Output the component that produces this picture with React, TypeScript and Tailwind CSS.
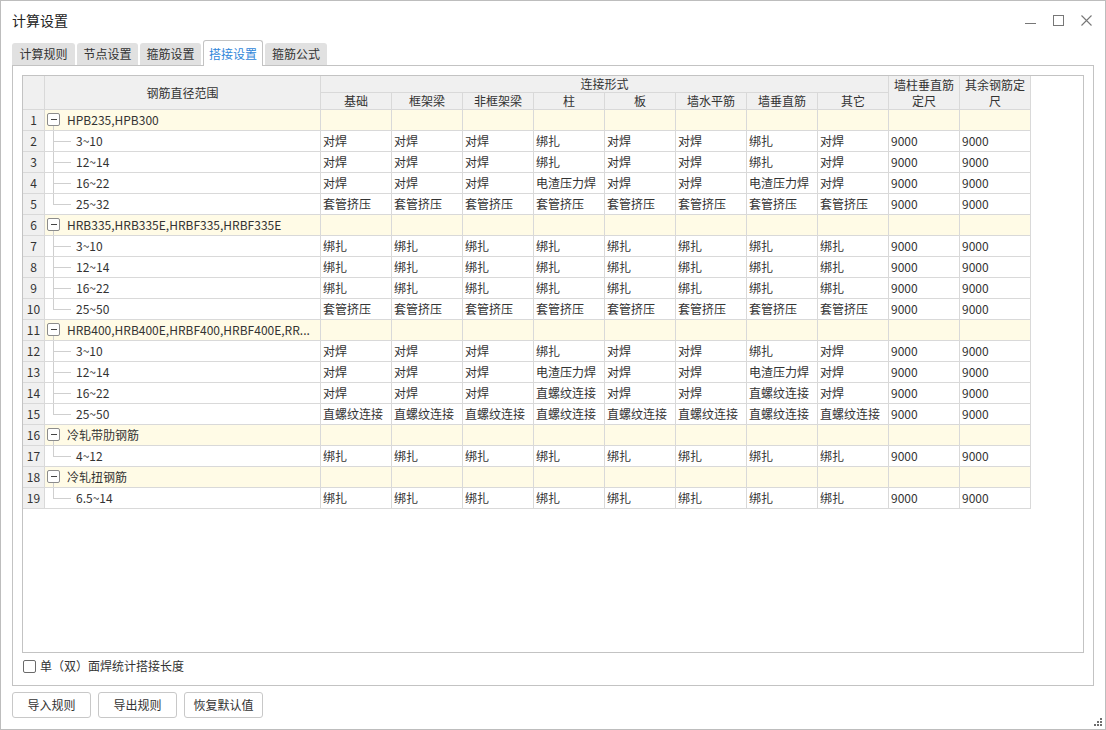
import type { ReactNode } from 'react'

type Row =
  | { kind: 'group'; label: string }
  | { kind: 'item'; range: string; vals: string[]; last?: boolean }

const HAN = '对焊'
const BANG = '绑扎'
const DZ = '电渣压力焊'
const TG = '套管挤压'
const ZL = '直螺纹连接'

const fill = (v: string) => Array(8).fill(v) as string[]

const rows: Row[] = [
  { kind: 'group', label: 'HPB235,HPB300' },
  { kind: 'item', range: '3~10', vals: [HAN, HAN, HAN, BANG, HAN, HAN, BANG, HAN] },
  { kind: 'item', range: '12~14', vals: [HAN, HAN, HAN, BANG, HAN, HAN, BANG, HAN] },
  { kind: 'item', range: '16~22', vals: [HAN, HAN, HAN, DZ, HAN, HAN, DZ, HAN] },
  { kind: 'item', range: '25~32', vals: fill(TG), last: true },
  { kind: 'group', label: 'HRB335,HRB335E,HRBF335,HRBF335E' },
  { kind: 'item', range: '3~10', vals: fill(BANG) },
  { kind: 'item', range: '12~14', vals: fill(BANG) },
  { kind: 'item', range: '16~22', vals: fill(BANG) },
  { kind: 'item', range: '25~50', vals: fill(TG), last: true },
  { kind: 'group', label: 'HRB400,HRB400E,HRBF400,HRBF400E,RR...' },
  { kind: 'item', range: '3~10', vals: [HAN, HAN, HAN, BANG, HAN, HAN, BANG, HAN] },
  { kind: 'item', range: '12~14', vals: [HAN, HAN, HAN, DZ, HAN, HAN, DZ, HAN] },
  { kind: 'item', range: '16~22', vals: [HAN, HAN, HAN, ZL, HAN, HAN, ZL, HAN] },
  { kind: 'item', range: '25~50', vals: fill(ZL), last: true },
  { kind: 'group', label: '冷轧带肋钢筋' },
  { kind: 'item', range: '4~12', vals: fill(BANG), last: true },
  { kind: 'group', label: '冷轧扭钢筋' },
  { kind: 'item', range: '6.5~14', vals: fill(BANG), last: true },
]

const subHeads = ['基础', '框架梁', '非框架梁', '柱', '板', '墙水平筋', '墙垂直筋', '其它']
const tabs = [
  { label: '计算规则', w: 'w-[63px]' },
  { label: '节点设置', w: 'w-[61px]' },
  { label: '箍筋设置', w: 'w-[61px]' },
  { label: '搭接设置', w: 'w-[60px]', active: true },
  { label: '箍筋公式', w: 'w-[62px]' },
]

const line = 'border-r border-b border-[#d9d9d9]'

function Head({ className = '', children }: { className?: string; children?: ReactNode }) {
  return (
    <div className={`flex items-center justify-center bg-[#f0f0f0] text-center leading-[16px] ${line} ${className}`}>
      {children}
    </div>
  )
}

function GroupGlyph() {
  return (
    <svg width="16" height="20" viewBox="0 0 16 20" className="shrink-0" aria-hidden>
      <rect x="2.5" y="3.5" width="12" height="12" rx="1.5" fill="#fff" stroke="#8c8c8c" />
      <path d="M5.5 9.5h6" stroke="#444" shapeRendering="crispEdges" />
      <path d="M8.5 16v4" stroke="#cfcfcf" shapeRendering="crispEdges" />
    </svg>
  )
}

function BranchGlyph({ last }: { last?: boolean }) {
  return (
    <svg width="31" height="20" viewBox="0 0 31 20" className="shrink-0" aria-hidden>
      <path d={last ? 'M8.5 0v10.5' : 'M8.5 0v20'} stroke="#cfcfcf" shapeRendering="crispEdges" />
      <path d="M8.5 10.5H26" stroke="#cfcfcf" shapeRendering="crispEdges" />
    </svg>
  )
}

function WindowControls() {
  return (
    <div className="ml-auto flex items-center gap-[17px] text-[#777]">
      <svg width="11" height="11" viewBox="0 0 11 11" aria-hidden>
        <path d="M0 8.5h11" stroke="currentColor" shapeRendering="crispEdges" />
      </svg>
      <svg width="11" height="11" viewBox="0 0 11 11" aria-hidden>
        <rect x="0.5" y="0.5" width="10" height="10" fill="none" stroke="currentColor" shapeRendering="crispEdges" />
      </svg>
      <svg width="11" height="11" viewBox="0 0 11 11" aria-hidden>
        <path d="M0.5 0.5l10 10M10.5 0.5l-10 10" stroke="currentColor" strokeWidth="1.1" />
      </svg>
    </div>
  )
}

export default function App() {
  return (
    <div className="relative flex h-[730px] w-[1106px] flex-col border border-[#bdbdbd] bg-white font-['Noto_Sans_CJK_SC',sans-serif] text-[12px] text-[#333]">
      {/* title bar */}
      <div className="flex h-[39px] shrink-0 items-center pl-[11px] pr-[13px]">
        <span className="text-[14px] text-[#222]">计算设置</span>
        <WindowControls />
      </div>

      {/* tabs */}
      <div className="relative z-10 flex h-[25px] shrink-0 items-start gap-[2px] pl-[11px]">
        {tabs.map((t) =>
          t.active ? (
            <div
              key={t.label}
              className={`${t.w} flex h-[26px] items-center justify-center rounded-t-[3px] border-x border-t border-[#c3c3c3] bg-white text-[#2f86d9]`}
            >
              {t.label}
            </div>
          ) : (
            <div
              key={t.label}
              className={`${t.w} mt-[3px] flex h-[22px] items-center justify-center rounded-t-[3px] bg-[#e1e1e1] text-[#333]`}
            >
              {t.label}
            </div>
          ),
        )}
      </div>

      {/* panel */}
      <div className="mx-[11px] flex h-[621px] shrink-0 flex-col border border-[#c3c3c3] px-[9px] pt-[9px]">
        <div className="h-[578px] shrink-0 overflow-hidden border border-[#c3c3c3]">
          <div className="grid grid-cols-[22px_276px_repeat(10,71px)] grid-rows-[17px_17px_repeat(19,21px)]">
            <Head className="row-span-2" />
            <Head className="row-span-2">钢筋直径范围</Head>
            <Head className="col-span-8">连接形式</Head>
            <Head className="row-span-2">
              墙柱垂直筋
              <br />
              定尺
            </Head>
            <Head className="row-span-2">
              其余钢筋定
              <br />
              尺
            </Head>
            {subHeads.map((h) => (
              <Head key={h}>{h}</Head>
            ))}

            {rows.map((r, i) => (
              <div key={i} className="contents">
                <div className={`flex items-center justify-center bg-[#f0f0f0] ${line}`}>{i + 1}</div>
                {r.kind === 'group' ? (
                  <>
                    <div className={`flex items-center bg-[#fffbe6] ${line}`}>
                      <GroupGlyph />
                      <span className="ml-[6px] whitespace-nowrap">{r.label}</span>
                    </div>
                    {Array.from({ length: 10 }).map((_, c) => (
                      <div key={c} className={`bg-[#fffbe6] ${line}`} />
                    ))}
                  </>
                ) : (
                  <>
                    <div className={`flex items-center ${line}`}>
                      <BranchGlyph last={r.last} />
                      <span className="whitespace-nowrap">{r.range}</span>
                    </div>
                    {[...r.vals, '9000', '9000'].map((v, c) => (
                      <div key={c} className={`flex items-center whitespace-nowrap pl-[2px] ${line}`}>
                        {v}
                      </div>
                    ))}
                  </>
                )}
              </div>
            ))}
          </div>
        </div>

        <label className="ml-[1px] mt-[6px] flex h-[14px] items-center">
          <span className="h-[13px] w-[13px] rounded-[2px] border border-[#6b6b6b] bg-white" />
          <span className="ml-[4px]">单（双）面焊统计搭接长度</span>
        </label>
      </div>

      {/* buttons */}
      <div className="mt-[6px] flex gap-[7px] pl-[11px]">
        {['导入规则', '导出规则', '恢复默认值'].map((b) => (
          <button
            key={b}
            className="h-[26px] w-[79px] rounded-[3px] border border-[#c8c8c8] bg-white text-[12px] text-[#333]"
          >
            {b}
          </button>
        ))}
      </div>

      {/* resize grip */}
      <svg width="8" height="8" viewBox="0 0 8 8" className="absolute bottom-[3px] right-[3px]" aria-hidden>
        <g fill="#6e6e6e">
          <rect x="6" y="0" width="2" height="2" />
          <rect x="3" y="3" width="2" height="2" />
          <rect x="6" y="3" width="2" height="2" />
          <rect x="0" y="6" width="2" height="2" />
          <rect x="3" y="6" width="2" height="2" />
          <rect x="6" y="6" width="2" height="2" />
        </g>
      </svg>
    </div>
  )
}
